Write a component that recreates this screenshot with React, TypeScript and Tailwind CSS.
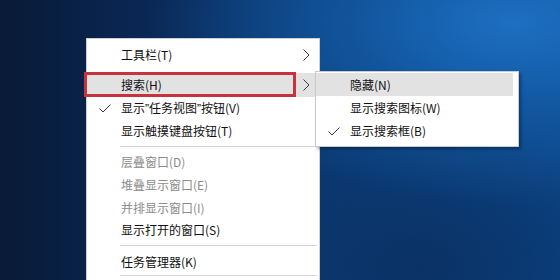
import React from "react";

const Check = () => (
  <svg width="12" height="9" viewBox="0 0 12 9" fill="none" stroke="#3a3a3a" strokeWidth="1">
    <path d="M0.5 4.5 L4 8 L11.5 0.5" />
  </svg>
);

const Chevron = () => (
  <svg width="7" height="12" viewBox="0 0 7 12" fill="none" stroke="#3a3a3a" strokeWidth="1">
    <path d="M0.5 0.5 L6 6 L0.5 11.5" />
  </svg>
);

type RowProps = {
  label: React.ReactNode;
  h: string;
  checked?: boolean;
  sub?: boolean;
  disabled?: boolean;
  active?: boolean;
  extra?: string;
};

function Row({ label, h, checked, sub, disabled, active, extra }: RowProps) {
  return (
    <div
      className={`flex items-center ${h} ${active ? "bg-[#e2e2e2]" : ""} ${extra ?? ""}`}
    >
      <div className="w-[34px] pl-[12px] flex items-center">{checked ? <Check /> : null}</div>
      <span className={`flex-1 whitespace-nowrap ${disabled ? "text-[#8c8c8c]" : "text-[#111]"}`}>{label}</span>
      {sub ? (
        <div className="pr-[9px] flex items-center">
          <Chevron />
        </div>
      ) : null}
    </div>
  );
}

function Sep({ h, pt }: { h: string; pt: string }) {
  return (
    <div className={`${h} ${pt}`}>
      <div className="h-px bg-[#d6d6d6] ml-[33px] mr-[2px]" />
    </div>
  );
}

const Q = ({ c }: { c: string }) => (
  <span className="font-['Liberation_Sans',sans-serif]">{c}</span>
);

export default function App() {
  return (
    <div
      className="relative w-[560px] h-[280px] overflow-hidden text-[12px] leading-none bg-[radial-gradient(ellipse_at_92%_8%,#1d6fc2_0%,rgba(22,100,180,0.6)_22%,transparent_50%),radial-gradient(ellipse_at_75%_95%,#0a3266_0%,transparent_55%),linear-gradient(90deg,#081a36_0%,#0a2550_22%,#0b3a74_55%,#0c4484_80%,#0d4a8e_100%)]"
      style={{ fontFamily: '"Noto Sans CJK SC", "Noto Sans", sans-serif' }}
    >
      {/* main context menu */}
      <div className="absolute left-[86px] top-[38px] w-[234px] h-[260px] bg-white border border-[#cfcfcf] pt-[3px]">
        <Row label="工具栏(T)" h="h-[26px]" sub />
        <div className="h-[5px]" />
        <Row label="搜索(H)" h="h-[24px]" sub active />
        <Row
          label={
            <>
              显示<Q c="”" />任务视图<Q c="”" />按钮(V)
            </>
          }
          h="h-[23px]"
          checked
        />
        <Row label="显示触摸键盘按钮(T)" h="h-[21px]" />
        <Sep h="h-[10px]" pt="pt-[5px]" />
        <Row label="层叠窗口(D)" h="h-[22px]" disabled />
        <Row label="堆叠显示窗口(E)" h="h-[23px]" disabled />
        <Row label="并排显示窗口(I)" h="h-[23px]" disabled />
        <Row label="显示打开的窗口(S)" h="h-[22px]" />
        <Sep h="h-[9px]" pt="pt-[4px]" />
        <Row label="任务管理器(K)" h="h-[23px]" />
        <Sep h="h-[9px]" pt="pt-[2px]" />
      </div>

      {/* red annotation box */}
      <div className="absolute left-[84px] top-[72px] w-[212px] h-[25px] border-[3px] border-[#c8323c]" />

      {/* submenu */}
      <div className="absolute left-[315px] top-[71px] w-[204px] h-[76px] bg-white border border-[#c8ccd2] pt-[1px] shadow-[2px_2px_3px_rgba(0,0,0,0.35)]">
        <Row label="隐藏(N)" h="h-[23px]" active extra="mr-[5px]" />
        <Row label="显示搜索图标(W)" h="h-[24px]" />
        <Row label="显示搜索框(B)" h="h-[22px]" checked />
      </div>
    </div>
  );
}
